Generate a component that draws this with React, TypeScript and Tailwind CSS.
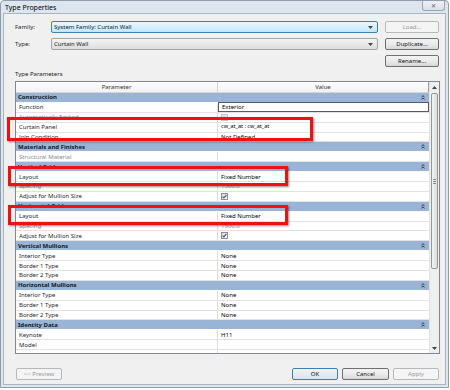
import React from "react";

type Row =
  | { kind: "group"; label: string }
  | {
      kind: "row";
      label: string;
      value?: string;
      disabled?: boolean;
      check?: "on" | "off";
      boxed?: boolean;
      small?: boolean;
    };

const rows: Row[] = [
  { kind: "group", label: "Construction" },
  { kind: "row", label: "Function", value: "Exterior", boxed: true },
  { kind: "row", label: "Automatically Embed", disabled: true, check: "off" },
  { kind: "row", label: "Curtain Panel", value: "cw_at_at : cw_at_at", small: true },
  { kind: "row", label: "Join Condition", value: "Not Defined" },
  { kind: "group", label: "Materials and Finishes" },
  { kind: "row", label: "Structural Material", disabled: true },
  { kind: "group", label: "Vertical Grid" },
  { kind: "row", label: "Layout", value: "Fixed Number" },
  { kind: "row", label: "Spacing", value: "1500.0", disabled: true },
  { kind: "row", label: "Adjust for Mullion Size", check: "on" },
  { kind: "group", label: "Horizontal Grid" },
  { kind: "row", label: "Layout", value: "Fixed Number" },
  { kind: "row", label: "Spacing", value: "1500.0", disabled: true },
  { kind: "row", label: "Adjust for Mullion Size", check: "on" },
  { kind: "group", label: "Vertical Mullions" },
  { kind: "row", label: "Interior Type", value: "None" },
  { kind: "row", label: "Border 1 Type", value: "None" },
  { kind: "row", label: "Border 2 Type", value: "None" },
  { kind: "group", label: "Horizontal Mullions" },
  { kind: "row", label: "Interior Type", value: "None" },
  { kind: "row", label: "Border 1 Type", value: "None" },
  { kind: "row", label: "Border 2 Type", value: "None" },
  { kind: "group", label: "Identity Data" },
  { kind: "row", label: "Keynote", value: "H11" },
  { kind: "row", label: "Model" },
  { kind: "row", label: "Manufacturer" },
];

function Collapse() {
  return (
    <svg width="4" height="5" viewBox="0 0 4 5" className="mr-[4px]">
      <path d="M0.5 2 L2 0.7 L3.5 2 M0.5 4.3 L2 3 L3.5 4.3" stroke="#2a2f36" strokeWidth="0.9" fill="none" />
    </svg>
  );
}

function Check(props: { on: boolean; disabled?: boolean }) {
  return (
    <div
      className={`w-[7px] h-[7px] border ${
        props.disabled ? "border-[#c4c4c4] bg-[#e6e6e6]" : "border-[#8e8f8f] bg-gradient-to-br from-[#dcdcdc] to-white"
      } flex items-center justify-center`}
    >
      {props.on && (
        <svg width="5" height="5" viewBox="0 0 5 5">
          <path d="M0.6 2.6 L1.9 4 L4.4 0.8" stroke="#2a4c8e" strokeWidth="1.1" fill="none" />
        </svg>
      )}
    </div>
  );
}

function Arrow(props: { up?: boolean }) {
  return (
    <svg width="5" height="3" viewBox="0 0 5 3">
      <path d={props.up ? "M0 3 L2.5 0 L5 3 Z" : "M0 0 L5 0 L2.5 3 Z"} fill="#444" />
    </svg>
  );
}

function Button(props: { label: string; disabled?: boolean; primary?: boolean; w: string }) {
  const { label, disabled, primary, w } = props;
  return (
    <div
      className={`${w} h-[12px] rounded-[2px] border flex items-center justify-center text-[6px] ${
        disabled
          ? "border-[#b5b9bc] bg-[#f4f4f4] text-[#9a9a9a]"
          : primary
          ? "border-[#3c7fb1] bg-gradient-to-b from-[#f2f2f2] to-[#d9e4ee] text-[#111]"
          : "border-[#707070] bg-gradient-to-b from-[#f2f2f2] via-[#ebebeb] to-[#d6d6d6] text-[#111]"
      }`}
    >
      {label}
    </div>
  );
}

export default function App() {
  return (
    <div className="relative w-[450px] h-[390px] bg-white overflow-hidden font-['Noto_Sans',sans-serif] text-[6px] leading-none text-[#1a1a1a]">
      <div className="w-[449px] h-[388px] bg-[#dde5ee] border border-[#8d9bab] rounded-t-[4px] flex flex-col px-[2px] pb-[2px]">
        <div className="h-[12px] flex items-start justify-between pl-[2px]">
          <span className="text-[7px] text-black mt-[3px]">Type Properties</span>
          <div className="w-[23px] h-[10px] mr-[1px] border border-[#9aa6b3] border-t-0 rounded-b-[3px] bg-gradient-to-b from-[#eef2f6] to-[#d7dfe8] flex items-center justify-center text-[6px] text-[#55606c]">
            ✕
          </div>
        </div>
        <div className="flex-1 bg-[#f0f0f0] border border-[#a9b4c1] flex flex-col">
          {/* Family */}
          <div className="flex items-center mt-[7px] pl-[11px]">
            <span className="w-[36px] text-[#222]">Family:</span>
            <div className="w-[327px] h-[12px] border border-[#3c7fb1] rounded-[2px] bg-gradient-to-b from-[#eaf6fd] via-[#d9f0fc] to-[#bee6fd] flex items-center justify-between px-[2px]">
              <span>System Family: Curtain Wall</span>
              <span className="mr-[2px]"><Arrow /></span>
            </div>
            <div className="ml-[7px]">
              <Button label="Load..." disabled w="w-[54px]" />
            </div>
          </div>
          {/* Type */}
          <div className="flex items-center mt-[5px] pl-[11px]">
            <span className="w-[36px] text-[#222]">Type:</span>
            <div className="w-[327px] h-[12px] border border-[#a5a5a5] rounded-[2px] bg-gradient-to-b from-[#f4f4f4] via-[#e8e8e8] to-[#dcdcdc] flex items-center justify-between px-[2px]">
              <span>Curtain Wall</span>
              <span className="mr-[2px]"><Arrow /></span>
            </div>
            <div className="ml-[7px]">
              <Button label="Duplicate..." w="w-[54px]" />
            </div>
          </div>
          {/* Rename */}
          <div className="flex justify-end mt-[5px] pr-[6px]">
            <Button label="Rename..." w="w-[54px]" />
          </div>
          <div className="mt-[4px] pl-[11px] h-[8px] text-[#222]">Type Parameters</div>
          {/* Table */}
          <div className="ml-[11px] mt-[2px] w-[425px] h-[273px] border border-[#828790] bg-white flex">
            <div className="w-[413px] flex flex-col overflow-hidden">
              <div className="h-[11px] shrink-0 flex border-b border-[#d5d5d5] bg-gradient-to-b from-white to-[#f1f2f4] text-[#333]">
                <div className="w-[202px] border-r border-[#d5d5d5] flex items-center justify-center">Parameter</div>
                <div className="flex-1 border-r border-[#a0a0a0] flex items-center justify-center">Value</div>
              </div>
              {rows.map((r, i) =>
                r.kind === "group" ? (
                  <div
                    key={i}
                    className="h-[9.9px] shrink-0 bg-[#9ab4d5] border-b border-white flex items-center justify-between pl-[2px] font-bold text-[#111a26]"
                  >
                    <span>{r.label}</span>
                    <Collapse />
                  </div>
                ) : (
                  <div key={i} className="h-[9.9px] shrink-0 flex border-b border-[#e2e2e2]">
                    <div
                      className={`w-[202px] border-r border-[#dcdcdc] flex items-center pl-[3px] ${
                        r.disabled ? "text-[#8a8a8a]" : "text-[#1f1f1f]"
                      }`}
                    >
                      {r.label}
                    </div>
                    <div
                      className={`flex-1 flex items-center pl-[3px] ${
                        r.boxed ? "border border-[#5a5a5a] -mt-px" : ""
                      } ${r.disabled ? "text-[#9a9a9a]" : "text-black"} ${r.small ? "text-[5.5px]" : ""}`}
                    >
                      {r.check ? <Check on={r.check === "on"} disabled={r.disabled} /> : r.value}
                    </div>
                  </div>
                )
              )}
            </div>
            {/* Scrollbar */}
            <div className="w-[10px] border-l border-[#e3e3e3] bg-[#eeeeee] flex flex-col items-center">
              <div className="h-[10px] flex items-center justify-center"><Arrow up /></div>
              <div className="w-[7px] h-[176px] mt-[1px] rounded-[2px] border border-[#979797] bg-gradient-to-r from-[#f4f4f4] to-[#dcdcdc] flex flex-col items-center justify-center gap-[1px]">
                <div className="w-[3px] h-px bg-[#8a8a8a]" />
                <div className="w-[3px] h-px bg-[#8a8a8a]" />
                <div className="w-[3px] h-px bg-[#8a8a8a]" />
              </div>
              <div className="flex-1" />
              <div className="h-[10px] flex items-center justify-center"><Arrow /></div>
            </div>
          </div>
          {/* Bottom buttons */}
          <div className="flex justify-between items-center mt-[14px] pl-[12px] pr-[6px]">
            <Button label="<< Preview" disabled w="w-[46px]" />
            <div className="flex gap-[4px]">
              <Button label="OK" primary w="w-[46px]" />
              <Button label="Cancel" w="w-[47px]" />
              <Button label="Apply" disabled w="w-[46px]" />
            </div>
          </div>
        </div>
      </div>

      {/* red annotation boxes */}
      <div className="absolute left-[7px] top-[117px] w-[306px] h-[24px] border-[3px] border-[#f01010] shadow-[1px_1px_2px_rgba(0,0,0,0.45)]" />
      <div className="absolute left-[8px] top-[166px] w-[280px] h-[20px] border-[3px] border-[#f01010] shadow-[1px_1px_2px_rgba(0,0,0,0.45)]" />
      <div className="absolute left-[8px] top-[205px] w-[280px] h-[20px] border-[3px] border-[#f01010] shadow-[1px_1px_2px_rgba(0,0,0,0.45)]" />
    </div>
  );
}
